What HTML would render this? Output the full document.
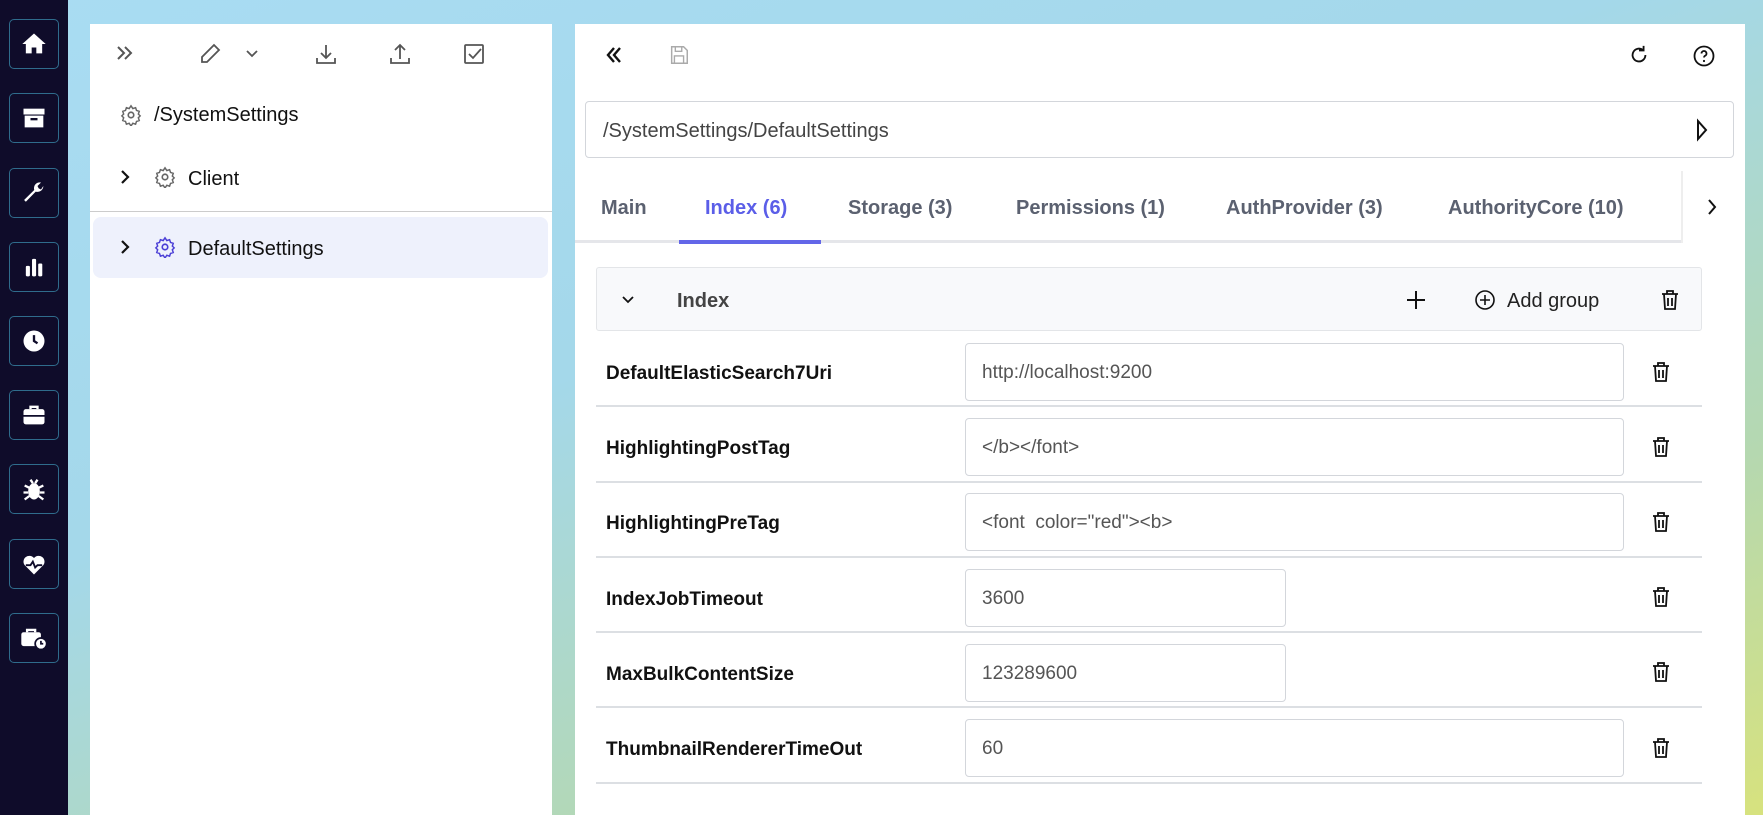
<!DOCTYPE html>
<html><head><meta charset="utf-8"><style>
*{box-sizing:border-box;margin:0;padding:0}
body{width:1763px;height:815px;overflow:hidden;position:relative;font-family:"Liberation Sans",sans-serif;
background:linear-gradient(160deg,#a9dcf3 0%,#a4d8ea 40%,#b5d8b0 75%,#d7e27e 100%);}
.side{position:absolute;left:0;top:0;width:68px;height:815px;background:#0f0c2a}
.sb{position:absolute;left:9px;width:50px;height:50px;border:1.5px solid #2f6c8c;border-radius:5px;display:flex;align-items:center;justify-content:center}
.panel{position:absolute;background:#fff;top:24px;bottom:0}
.ic{position:absolute}
.tree{position:absolute;font-size:20px;color:#111}
.tab{position:absolute;top:197px;font-size:20px;font-weight:bold;color:#5b6170}
.lbl{position:absolute;left:606px;font-size:19px;font-weight:bold;color:#111}
.inp{position:absolute;left:965px;height:58px;border:1px solid #d3d6db;border-radius:4px;font-size:19px;color:#555;padding:18px 16px 0}
.sep{position:absolute;left:596px;width:1106px;height:2px;background:#dcdfe3}
.tr{position:absolute;left:1650px}
</style></head><body>
<div class="side">
<div class="sb" style="top:19px"><svg width="28" height="28" viewBox="0 0 24 24"><path d="M12 3L2 12h3v8h5v-5h4v5h5v-8h3z" fill="#fff"/></svg></div>
<div class="sb" style="top:93px"><svg width="28" height="28" viewBox="0 0 24 24"><rect x="3" y="4" width="18" height="5" fill="#fff"/><path d="M4 10h16v10H4z" fill="#fff"/><rect x="9" y="12" width="6" height="2" fill="#0f0c2a"/></svg></div>
<div class="sb" style="top:168px"><svg width="28" height="28" viewBox="0 0 24 24"><path d="M20 6a5 5 0 0 1-6.5 4.8L5 19.5 3.5 18l8.7-8.6A5 5 0 0 1 18 3l-3 3 1 2 2 1z" fill="#fff"/></svg></div>
<div class="sb" style="top:242px"><svg width="28" height="28" viewBox="0 0 24 24"><rect x="5" y="11" width="3.5" height="9" rx="1" fill="#fff"/><rect x="10.3" y="5" width="3.5" height="15" rx="1" fill="#fff"/><rect x="15.6" y="9" width="3.5" height="11" rx="1" fill="#fff"/></svg></div>
<div class="sb" style="top:316px"><svg width="28" height="28" viewBox="0 0 24 24"><circle cx="12" cy="12" r="9" fill="#fff"/><path d="M12 7v5l3 2" stroke="#0f0c2a" stroke-width="2" fill="none"/></svg></div>
<div class="sb" style="top:390px"><svg width="28" height="28" viewBox="0 0 24 24"><rect x="3" y="7" width="18" height="13" rx="2" fill="#fff"/><path d="M9 7V5h6v2" stroke="#fff" stroke-width="2" fill="none"/><rect x="3" y="12" width="18" height="1.5" fill="#0f0c2a"/></svg></div>
<div class="sb" style="top:464px"><svg width="28" height="28" viewBox="0 0 24 24"><ellipse cx="12" cy="14" rx="5" ry="7" fill="#fff"/><path d="M4 9l4 2M20 9l-4 2M3 15h4M21 15h-4M4 21l4-3M20 21l-4-3M9 4l2 3M15 4l-2 3" stroke="#fff" stroke-width="2"/></svg></div>
<div class="sb" style="top:539px"><svg width="28" height="28" viewBox="0 0 24 24"><path d="M12 21l-8-8a5 5 0 0 1 8-6 5 5 0 0 1 8 6z" fill="#fff"/><path d="M5 13h4l2-3 2 5 2-2h4" stroke="#0f0c2a" stroke-width="1.6" fill="none"/></svg></div>
<div class="sb" style="top:613px"><svg width="30" height="28" viewBox="0 0 26 24"><rect x="2" y="7" width="17" height="12" rx="2" fill="#fff"/><path d="M7 7V5h7v2" stroke="#fff" stroke-width="2" fill="none"/><circle cx="19" cy="17" r="5" fill="#fff" stroke="#0f0c2a" stroke-width="1.5"/><path d="M19 14.5V17h2" stroke="#0f0c2a" stroke-width="1.5" fill="none"/></svg></div>
</div>

<div class="panel" style="left:90px;width:462px">
<svg class="ic" style="left:24px;top:18px" width="22" height="22" viewBox="0 0 22 22"><path d="M4 5l6 6-6 6M11 5l6 6-6 6" stroke="#555" stroke-width="2" fill="none"/></svg>
<svg class="ic" style="left:108px;top:18px" width="24" height="24" viewBox="0 0 24 24"><path d="M16 3l5 5L9 20H4v-5z" stroke="#555" stroke-width="1.8" fill="none"/></svg>
<svg class="ic" style="left:154px;top:22px" width="16" height="16" viewBox="0 0 16 16"><path d="M3 5l5 5 5-5" stroke="#555" stroke-width="1.8" fill="none"/></svg>
<svg class="ic" style="left:224px;top:18px" width="24" height="24" viewBox="0 0 24 24"><path d="M12 3v13M7 11l5 5 5-5M3 16v5h18v-5" stroke="#555" stroke-width="1.8" fill="none"/></svg>
<svg class="ic" style="left:298px;top:18px" width="24" height="24" viewBox="0 0 24 24"><path d="M12 17V3M7 8l5-5 5 5M3 16v5h18v-5" stroke="#555" stroke-width="1.8" fill="none"/></svg>
<svg class="ic" style="left:372px;top:18px" width="24" height="24" viewBox="0 0 24 24"><rect x="3" y="3" width="18" height="18" rx="1" stroke="#555" stroke-width="1.8" fill="none"/><path d="M7 12l4 4 8-9" stroke="#555" stroke-width="1.8" fill="none"/></svg>
<svg class="ic" style="left:30px;top:80px" width="22" height="22" viewBox="0 0 24 24"><circle cx="12" cy="12" r="3" stroke="#666" stroke-width="1.8" fill="none"/><path d="M12 2l2 3 3-1 1 3 3 1-1 3 2 2-2 2 1 3-3 1-1 3-3-1-2 3-2-3-3 1-1-3-3-1 1-3-2-2 2-2-1-3 3-1 1-3 3 1z" stroke="#666" stroke-width="1.6" fill="none"/></svg>
<div class="tree" style="left:64px;top:80px">/SystemSettings</div>
<svg class="ic" style="left:26px;top:144px" width="18" height="18" viewBox="0 0 18 18"><path d="M6 3l6 6-6 6" stroke="#111" stroke-width="2.2" fill="none"/></svg>
<svg class="ic" style="left:64px;top:142px" width="22" height="22" viewBox="0 0 24 24"><circle cx="12" cy="12" r="3" stroke="#666" stroke-width="1.8" fill="none"/><path d="M12 2l2 3 3-1 1 3 3 1-1 3 2 2-2 2 1 3-3 1-1 3-3-1-2 3-2-3-3 1-1-3-3-1 1-3-2-2 2-2-1-3 3-1 1-3 3 1z" stroke="#666" stroke-width="1.6" fill="none"/></svg>
<div class="tree" style="left:98px;top:144px">Client</div>
<div style="position:absolute;left:0;top:187px;width:462px;height:1px;background:#ccc"></div>
<div style="position:absolute;left:3px;top:193px;width:455px;height:61px;background:#eef1fc;border-radius:8px"></div>
<svg class="ic" style="left:26px;top:214px" width="18" height="18" viewBox="0 0 18 18"><path d="M6 3l6 6-6 6" stroke="#111" stroke-width="2.2" fill="none"/></svg>
<svg class="ic" style="left:64px;top:212px" width="22" height="22" viewBox="0 0 24 24"><circle cx="12" cy="12" r="3" stroke="#4b3fd6" stroke-width="1.8" fill="none"/><path d="M12 2l2 3 3-1 1 3 3 1-1 3 2 2-2 2 1 3-3 1-1 3-3-1-2 3-2-3-3 1-1-3-3-1 1-3-2-2 2-2-1-3 3-1 1-3 3 1z" stroke="#4b3fd6" stroke-width="1.6" fill="none"/></svg>
<div class="tree" style="left:98px;top:214px">DefaultSettings</div>
</div>

<div class="panel" style="left:575px;width:1170px"></div>
<svg class="ic" style="left:603px;top:44px" width="22" height="22" viewBox="0 0 22 22"><path d="M11 4l-6 7 6 7M17 4l-6 7 6 7" stroke="#111" stroke-width="2.4" fill="none"/></svg>
<svg class="ic" style="left:668px;top:44px" width="22" height="22" viewBox="0 0 24 24"><path d="M4 3h13l4 4v14H4z" stroke="#aaa" stroke-width="1.6" fill="none"/><rect x="8" y="3" width="7" height="5" stroke="#aaa" stroke-width="1.5" fill="none"/><rect x="7" y="13" width="10" height="8" stroke="#aaa" stroke-width="1.5" fill="none"/></svg>
<svg class="ic" style="left:1628px;top:44px" width="22" height="22" viewBox="0 0 24 24"><path d="M19 12a7 7 0 1 1-3-5.7M17 2v5h-5" stroke="#111" stroke-width="2" fill="none"/></svg>
<svg class="ic" style="left:1692px;top:44px" width="24" height="24" viewBox="0 0 24 24"><circle cx="12" cy="12" r="9.5" stroke="#111" stroke-width="1.8" fill="none"/><path d="M9.5 9.5a2.5 2.5 0 1 1 3.5 2.3c-.7.4-1 .9-1 1.7" stroke="#111" stroke-width="1.8" fill="none"/><circle cx="12" cy="17" r="1.1" fill="#111"/></svg>
<div style="position:absolute;left:585px;top:101px;width:1149px;height:57px;border:1px solid #d3d6db;border-radius:4px;font-size:20px;color:#444;padding:18px 17px 0">/SystemSettings/DefaultSettings</div>
<svg class="ic" style="left:1694px;top:118px" width="16" height="24" viewBox="0 0 16 24"><path d="M4 3l8 9-8 9z" stroke="#111" stroke-width="2" fill="none"/></svg>
<div style="position:absolute;left:575px;top:240px;width:1106px;height:3px;background:#e5e6ea"></div>
<div style="position:absolute;left:1681px;top:171px;width:2px;height:72px;background:#eee"></div>
<div style="position:absolute;left:679px;top:240px;width:142px;height:4px;background:#6366e8"></div>
<div class="tab" style="left:601px">Main</div>
<div class="tab" style="left:705px;color:#5b5ee8">Index (6)</div>
<div class="tab" style="left:848px">Storage (3)</div>
<div class="tab" style="left:1016px">Permissions (1)</div>
<div class="tab" style="left:1226px">AuthProvider (3)</div>
<div class="tab" style="left:1448px">AuthorityCore (10)</div>
<svg class="ic" style="left:1704px;top:196px" width="16" height="22" viewBox="0 0 16 22"><path d="M5 4l6 7-6 7" stroke="#111" stroke-width="2" fill="none"/></svg>

<div style="position:absolute;left:596px;top:267px;width:1106px;height:64px;background:#f8f9fb;border:1px solid #e3e5e8;border-radius:3px"></div>
<svg class="ic" style="left:620px;top:292px" width="16" height="16" viewBox="0 0 16 16"><path d="M3 5l5 5 5-5" stroke="#111" stroke-width="1.8" fill="none"/></svg>
<div style="position:absolute;left:677px;top:290px;font-size:20px;font-weight:bold;color:#444">Index</div>
<svg class="ic" style="left:1405px;top:289px" width="22" height="22" viewBox="0 0 22 22"><path d="M11 2v18M2 11h18" stroke="#111" stroke-width="2"/></svg>
<svg class="ic" style="left:1474px;top:289px" width="22" height="22" viewBox="0 0 22 22"><circle cx="11" cy="11" r="9" stroke="#111" stroke-width="1.6" fill="none"/><path d="M11 6v10M6 11h10" stroke="#111" stroke-width="1.6"/></svg>
<div style="position:absolute;left:1507px;top:290px;font-size:20px;color:#222">Add group</div>
<svg class="tr" style="left:1659px;top:288px" width="22" height="24" viewBox="0 0 22 24"><path d="M3 6h16M8 6V3h6v3M5 6l1 15h10l1-15M9 10v8M13 10v8" stroke="#111" stroke-width="1.8" fill="none"/></svg>

<div class="lbl" style="top:363px">DefaultElasticSearch7Uri</div>
<div class="inp" style="top:343px;width:659px">http://localhost:9200</div>
<div class="lbl" style="top:438px">HighlightingPostTag</div>
<div class="inp" style="top:418px;width:659px">&lt;/b&gt;&lt;/font&gt;</div>
<div class="lbl" style="top:513px">HighlightingPreTag</div>
<div class="inp" style="top:493px;width:659px">&lt;font&nbsp; color="red"&gt;&lt;b&gt;</div>
<div class="lbl" style="top:589px">IndexJobTimeout</div>
<div class="inp" style="top:569px;width:321px">3600</div>
<div class="lbl" style="top:664px">MaxBulkContentSize</div>
<div class="inp" style="top:644px;width:321px">123289600</div>
<div class="lbl" style="top:739px">ThumbnailRendererTimeOut</div>
<div class="inp" style="top:719px;width:659px">60</div>

<div class="sep" style="top:405px"></div><div class="sep" style="top:481px"></div><div class="sep" style="top:556px"></div><div class="sep" style="top:631px"></div><div class="sep" style="top:706px"></div><div class="sep" style="top:782px"></div>

<svg class="tr" style="top:360px" width="22" height="24" viewBox="0 0 22 24"><path d="M3 6h16M8 6V3h6v3M5 6l1 15h10l1-15M9 10v8M13 10v8" stroke="#111" stroke-width="1.8" fill="none"/></svg>
<svg class="tr" style="top:435px" width="22" height="24" viewBox="0 0 22 24"><path d="M3 6h16M8 6V3h6v3M5 6l1 15h10l1-15M9 10v8M13 10v8" stroke="#111" stroke-width="1.8" fill="none"/></svg>
<svg class="tr" style="top:510px" width="22" height="24" viewBox="0 0 22 24"><path d="M3 6h16M8 6V3h6v3M5 6l1 15h10l1-15M9 10v8M13 10v8" stroke="#111" stroke-width="1.8" fill="none"/></svg>
<svg class="tr" style="top:585px" width="22" height="24" viewBox="0 0 22 24"><path d="M3 6h16M8 6V3h6v3M5 6l1 15h10l1-15M9 10v8M13 10v8" stroke="#111" stroke-width="1.8" fill="none"/></svg>
<svg class="tr" style="top:660px" width="22" height="24" viewBox="0 0 22 24"><path d="M3 6h16M8 6V3h6v3M5 6l1 15h10l1-15M9 10v8M13 10v8" stroke="#111" stroke-width="1.8" fill="none"/></svg>
<svg class="tr" style="top:736px" width="22" height="24" viewBox="0 0 22 24"><path d="M3 6h16M8 6V3h6v3M5 6l1 15h10l1-15M9 10v8M13 10v8" stroke="#111" stroke-width="1.8" fill="none"/></svg>
</body></html>
